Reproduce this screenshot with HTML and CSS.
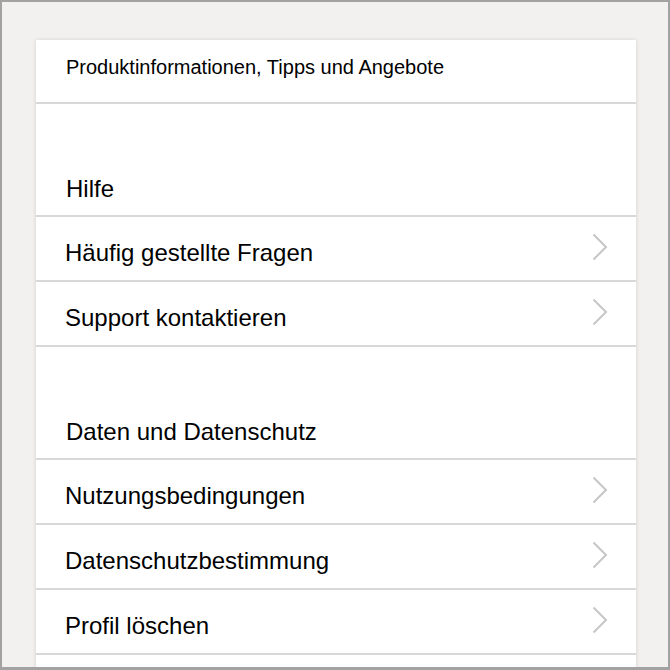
FILE: index.html
```html
<!DOCTYPE html>
<html lang="de">
<head>
  <meta charset="UTF-8" />
  <title>Einstellungen</title>
  <link rel="stylesheet" href="styles.css">
</head>
<body>
  <div class="frame">
    <div class="card">
      <div class="row row-small">Produktinformationen, Tipps und Angebote</div>

      <div class="section">Hilfe</div>
      <div class="row link">Häufig gestellte Fragen<svg class="chev" viewBox="0 0 16 28"><path d="M1.5 1.5L14 14L1.5 26.5"/></svg></div>
      <div class="row link">Support kontaktieren<svg class="chev" viewBox="0 0 16 28"><path d="M1.5 1.5L14 14L1.5 26.5"/></svg></div>

      <div class="section">Daten und Datenschutz</div>
      <div class="row link">Nutzungsbedingungen<svg class="chev" viewBox="0 0 16 28"><path d="M1.5 1.5L14 14L1.5 26.5"/></svg></div>
      <div class="row link">Datenschutzbestimmung<svg class="chev" viewBox="0 0 16 28"><path d="M1.5 1.5L14 14L1.5 26.5"/></svg></div>
      <div class="row link">Profil löschen<svg class="chev" viewBox="0 0 16 28"><path d="M1.5 1.5L14 14L1.5 26.5"/></svg></div>
      <div class="row link"></div>
    </div>
  </div>
</body>
</html>
```

FILE: styles.css
```css
html,body{margin:0;padding:0;background:#f2f1f0;font-family:"Liberation Sans",Arial,sans-serif;color:#000}
.frame{width:670px;height:670px;box-sizing:border-box;border:2px solid #a2a2a2;border-bottom-width:3px;background:#f2f1f0;overflow:hidden;padding-top:38px}
.card{width:600px;margin-left:34px;background:#fff;box-shadow:0 0 4px rgba(0,0,0,.14)}
.row{display:flex;align-items:flex-start;justify-content:space-between;box-sizing:border-box;height:65px;padding:24px 28px 0 29px;font-size:24px;line-height:24px;border-bottom:2px solid #d8d8d8}
.row-small{height:64px;padding:17px 30px 0 30px;font-size:20px;line-height:20px}
.section{box-sizing:border-box;height:113px;padding:73px 30px 0 30px;font-size:24px;line-height:24px;border-bottom:2px solid #d8d8d8}
.chev{width:16px;height:28px;margin-top:-8px;fill:none;stroke:#c6c6c6;stroke-width:2}
```
